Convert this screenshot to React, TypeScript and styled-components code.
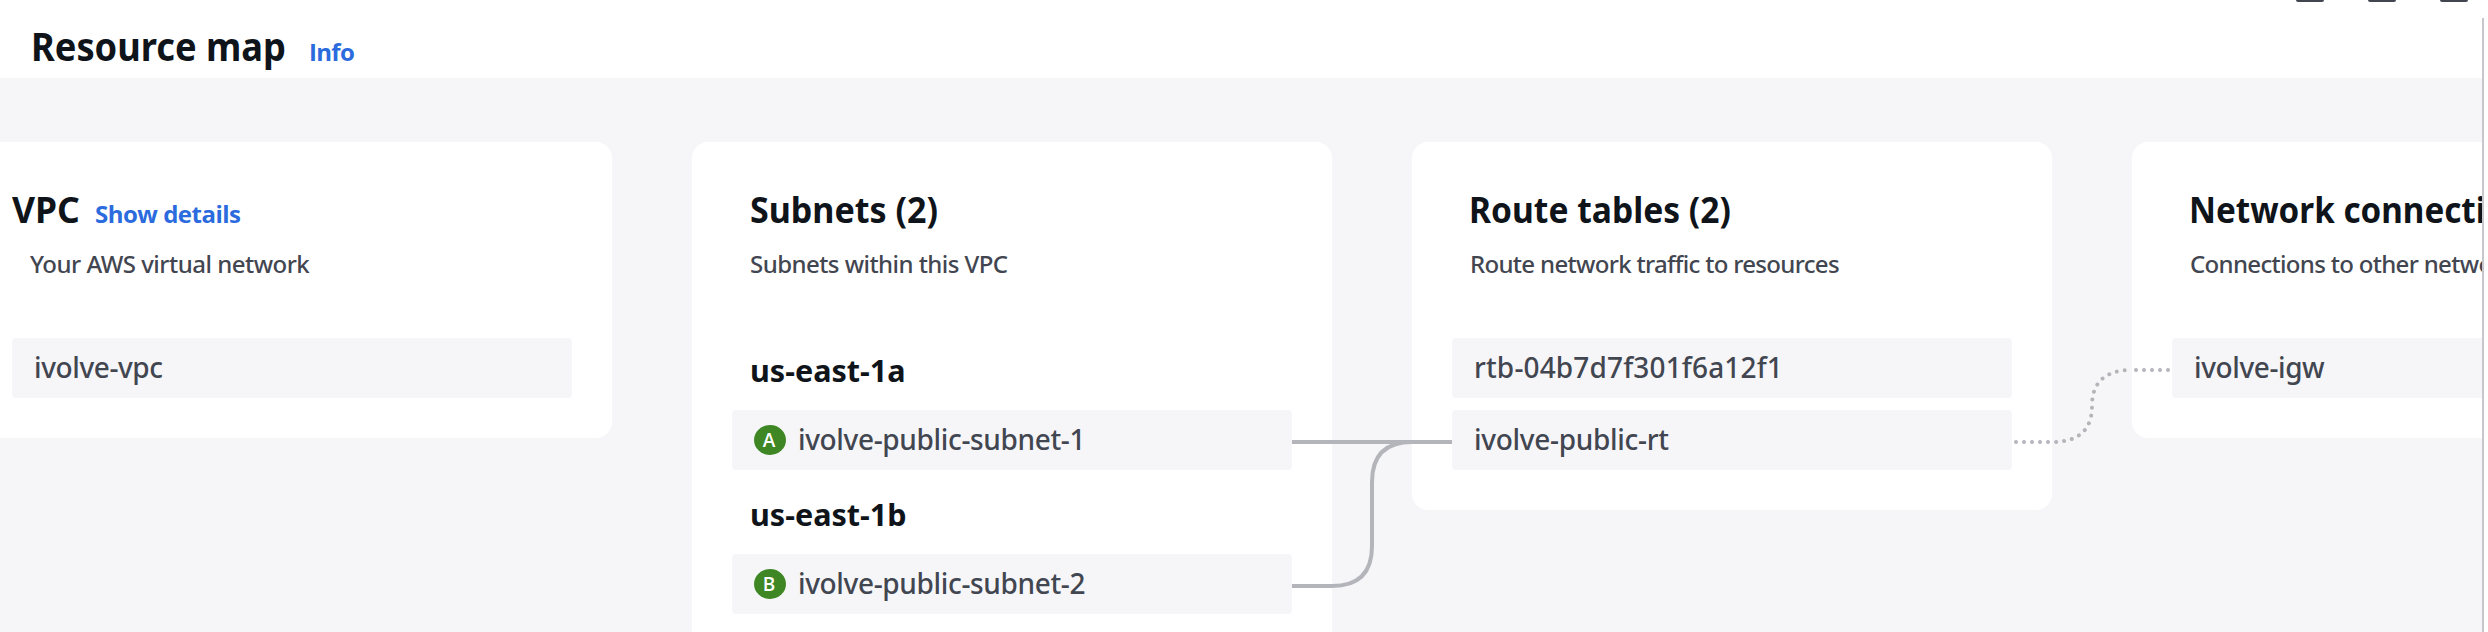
import React from 'react';
import styled, { createGlobalStyle } from 'styled-components';

const color = {
  heading: '#0f141a',
  body: '#424650',
  link: '#2b6bde',
  canvas: '#f6f6f9',
  line: '#b4b4bb',
  badge: '#3f8624',
};

const GlobalStyle = createGlobalStyle`
  * { box-sizing: border-box; }
  body {
    margin: 0;
    background: #fff;
    font-family: "Noto Sans", "Open Sans", sans-serif;
    overflow: hidden;
  }
  h2, h3, h4, p { margin: 0; }
`;

const Page = styled.div`
  display: flex;
  flex-direction: column;
  position: relative;
  width: 2488px;
  height: 632px;
  overflow: hidden;
  background: #fff;
`;

const Header = styled.header`
  display: flex;
  align-items: baseline;
  height: 78px;
  flex: none;
  padding: 19px 0 0 31px;
`;

/* Headings use a slightly condensed cut, anchored on the left edge. */
const Title = styled.h2<{ $width: number; $squeeze: number }>`
  width: ${(p) => p.$width}px;
  flex: none;
  color: ${color.heading};
  font-size: 40px;
  font-weight: 700;
  line-height: 54px;
  white-space: nowrap;
  transform: scaleX(${(p) => p.$squeeze});
  transform-origin: 0 0;
`;

const ColumnTitle = styled(Title).attrs({ as: 'h3' })`
  font-size: 36px;
  line-height: 48px;
`;

const ZoneTitle = styled(Title).attrs({ as: 'h4' })`
  margin: -1px 0 1px 18px;
  font-size: 31px;
  line-height: 42px;
`;

const Link = styled.a<{ $tracking: number }>`
  color: ${color.link};
  font-family: "Open Sans", sans-serif;
  font-size: 24px;
  font-weight: 700;
  line-height: 32px;
  letter-spacing: ${(p) => p.$tracking}px;
  white-space: nowrap;
`;

const Canvas = styled.main`
  display: flex;
  align-items: flex-start;
  gap: 80px;
  position: relative;
  width: 2482px;
  flex: 1;
  padding-top: 64px;
  overflow: hidden;
  background: ${color.canvas};
`;

const Card = styled.section<{ $first?: boolean }>`
  flex: none;
  width: 640px;
  margin-left: ${(p) => (p.$first ? '-28px' : '0')};
  padding: 44px 40px 40px;
  border-radius: 16px;
  background: #fff;
`;

const CardHead = styled.div<{ $indent: number }>`
  display: flex;
  align-items: baseline;
  height: 48px;
  padding-left: ${(p) => p.$indent}px;
`;

const Description = styled.p<{ $tracking: number }>`
  height: 104px;
  padding: 14px 0 0 18px;
  color: ${color.body};
  font-size: 24px;
  font-weight: 500;
  line-height: 32px;
  letter-spacing: ${(p) => p.$tracking}px;
  white-space: nowrap;
`;

const List = styled.div`
  display: flex;
  flex-direction: column;
  gap: 12px;
`;

const Zone = styled.div`
  display: flex;
  flex-direction: column;
  gap: 18px;
  padding-top: 12px;
`;

const Item = styled.div<{ $tracking: number }>`
  display: flex;
  align-items: center;
  gap: 12px;
  height: 60px;
  padding: 0 22px 2px;
  border-radius: 4px;
  background: ${color.canvas};
  color: ${color.body};
  font-size: 28px;
  font-weight: 500;
  line-height: 58px;
  letter-spacing: ${(p) => p.$tracking}px;
  white-space: nowrap;
`;

const Badge = styled.span`
  flex: none;
  width: 32px;
  height: 30px;
  margin-top: 2px;
  border-radius: 50%;
  background: ${color.badge};
  color: #fff;
  font-family: "Open Sans", sans-serif;
  font-size: 19px;
  font-weight: 600;
  line-height: 30px;
  letter-spacing: 0;
  text-align: center;
  text-indent: -2px;
`;

const Connectors = styled.svg`
  position: absolute;
  inset: 0;
  pointer-events: none;
`;

const ToolbarEdge = styled.div`
  display: flex;
  gap: 44px;
  position: absolute;
  top: 0;
  left: 2296px;
`;

const ButtonEdge = styled.span`
  width: 28px;
  height: 2px;
  border-radius: 0 0 3px 3px;
  background: ${color.body};
`;

const PanelEdge = styled.div`
  position: absolute;
  top: 18px;
  bottom: 0;
  left: 2482px;
  width: 2px;
  background: #c6c6cd;
`;

export default function App() {
  return (
    <Page>
      <GlobalStyle />
      <Header>
        <Title $width={278} $squeeze={0.906}>Resource map</Title>
        <Link $tracking={-0.7}>Info</Link>
      </Header>
      <Canvas>
        <Card $first>
          <CardHead $indent={0}>
            <ColumnTitle $width={83} $squeeze={0.985}>VPC</ColumnTitle>
            <Link $tracking={-0.5}>Show details</Link>
          </CardHead>
          <Description $tracking={-0.5}>Your AWS virtual network</Description>
          <List>
            <Item $tracking={-0.4}>ivolve-vpc</Item>
          </List>
        </Card>

        <Card>
          <CardHead $indent={18}>
            <ColumnTitle $width={200} $squeeze={0.945}>Subnets (2)</ColumnTitle>
          </CardHead>
          <Description $tracking={-0.55}>Subnets within this VPC</Description>
          <List>
            <Zone>
              <ZoneTitle $width={160} $squeeze={0.985}>us-east-1a</ZoneTitle>
              <Item $tracking={-0.35}><Badge>A</Badge>ivolve-public-subnet-1</Item>
            </Zone>
            <Zone>
              <ZoneTitle $width={160} $squeeze={0.985}>us-east-1b</ZoneTitle>
              <Item $tracking={-0.35}><Badge>B</Badge>ivolve-public-subnet-2</Item>
            </Zone>
          </List>
        </Card>

        <Card>
          <CardHead $indent={17}>
            <ColumnTitle $width={280} $squeeze={0.933}>Route tables (2)</ColumnTitle>
          </CardHead>
          <Description $tracking={-0.68}>Route network traffic to resources</Description>
          <List>
            <Item $tracking={0.15}>rtb-04b7d7f301f6a12f1</Item>
            <Item $tracking={-0.3}>ivolve-public-rt</Item>
          </List>
        </Card>

        <Card>
          <CardHead $indent={17}>
            <ColumnTitle $width={460} $squeeze={0.922}>Network connections (1)</ColumnTitle>
          </CardHead>
          <Description $tracking={-0.68}>Connections to other networks</Description>
          <List>
            <Item $tracking={-0.4}>ivolve-igw</Item>
          </List>
        </Card>

        <Connectors width="2482" height="554" viewBox="0 78 2482 554" fill="none" stroke={color.line} strokeWidth="4">
          <path d="M1292 442H1452" />
          <path d="M1292 586H1332Q1372 586 1372 546V482Q1372 442 1412 442" />
          <path d="M2016 442H2052Q2092 442 2092 406Q2092 370 2132 370" strokeLinecap="round" strokeDasharray="0.01 7.99" />
          <path d="M2136 370H2172" strokeLinecap="round" strokeDasharray="0.01 7.99" />
        </Connectors>
      </Canvas>
      <ToolbarEdge>
        <ButtonEdge />
        <ButtonEdge />
        <ButtonEdge />
      </ToolbarEdge>
      <PanelEdge />
    </Page>
  );
}
